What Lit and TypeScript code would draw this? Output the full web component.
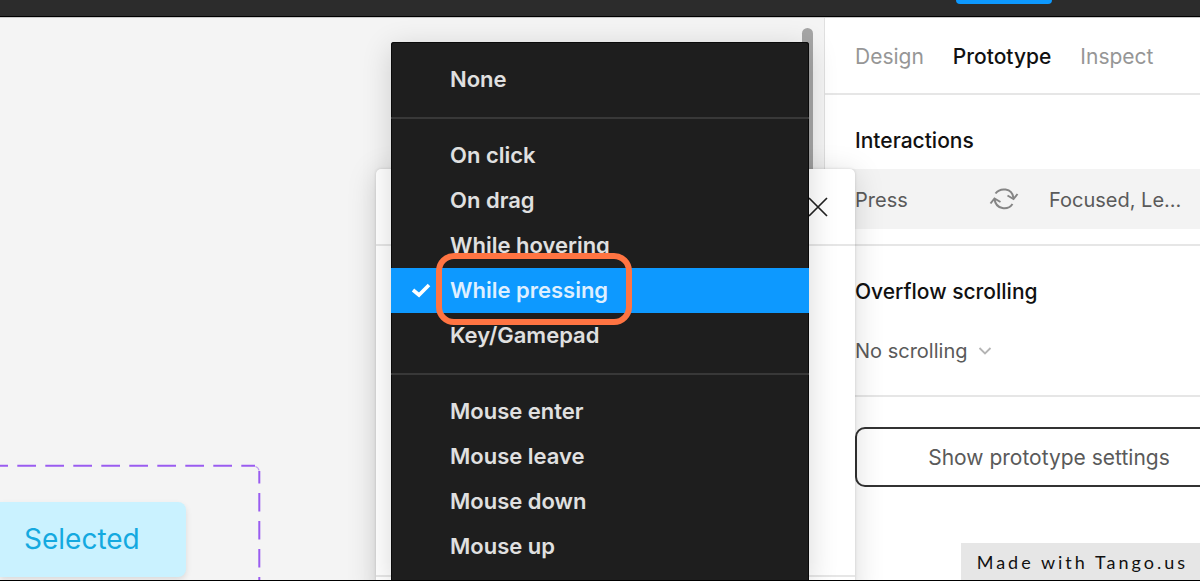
import { LitElement, html, css, svg } from "lit";
import { customElement, state } from "lit/decorators.js";

const GROUPS = [
  ["None"],
  ["On click", "On drag", "While hovering", "While pressing", "Key/Gamepad"],
  ["Mouse enter", "Mouse leave", "Mouse down", "Mouse up"],
];

@customElement("trigger-menu")
class TriggerMenu extends LitElement {
  @state() private selected = "While pressing";

  static styles = css`
    :host {
      display: block;
      box-sizing: border-box;
      padding-top: 15px;
      background: #1e1e1e;
      border-radius: 3px 3px 0 0;
      box-shadow: 0 0 0 1px #0a0a0a inset, 0 6px 30px rgba(0, 0, 0, 0.16);
    }
    .group + .group {
      margin-top: 15px;
      padding-top: 14px;
      border-top: 2px solid #383838;
    }
    .item {
      position: relative;
      display: flex;
      align-items: center;
      width: 100%;
      height: 45px;
      margin: 0;
      padding: 0 0 2px 20px;
      border: 0;
      background: none;
      color: #e0e0e0;
      font: 600 22px/28px Inter, sans-serif;
      text-align: left;
    }
    .mark {
      width: 20px;
      height: 20px;
      margin-right: 19px;
    }
    .selected {
      background: #0d99ff;
      color: #deefff;
    }
    .selected::after {
      content: "";
      position: absolute;
      box-sizing: border-box;
      left: 45px;
      top: -15px;
      width: 196px;
      height: 72px;
      border: 6px solid #ff7442;
      border-radius: 18px;
      z-index: 1;
    }
  `;

  render() {
    return html`<div role="menu">
      ${GROUPS.map(
        (g) => html`<div class="group" role="group">
          ${g.map((name) => {
            const on = name === this.selected;
            return html`<button
              class="item ${on ? "selected" : ""}"
              role="menuitemradio"
              aria-checked=${on ? "true" : "false"}
              @click=${() => (this.selected = name)}
            >
              <svg class="mark" viewBox="0 0 20 20" aria-hidden="true">
                ${on
                  ? svg`<path d="M2 10L8 15L18 5" fill="none" stroke="#fff" stroke-width="3.6"/>`
                  : ""}
              </svg>
              <span>${name}</span>
            </button>`;
          })}
        </div>`
      )}
    </div>`;
  }
}

@customElement("prototype-panel")
class PrototypePanel extends LitElement {
  static styles = css`
    :host {
      display: block;
      box-sizing: border-box;
      background: #fff;
      border-left: 1px solid #e0e0e0;
      color: #5a5a5a;
      font: 400 20px/28px Inter, sans-serif;
      overflow: hidden;
    }
    button,
    select {
      margin: 0;
      padding: 0;
      border: 0;
      background: none;
      color: inherit;
      font: inherit;
      appearance: none;
    }
    .tabs {
      display: flex;
      align-items: center;
      gap: 29px;
      box-sizing: border-box;
      height: 77px;
      padding: 2px 0 0 30px;
      border-bottom: 2px solid #e6e6e6;
    }
    .tab {
      color: #969696;
      font-size: 21px;
    }
    .tab.active {
      color: #111;
      font-weight: 500;
    }
    .title {
      display: block;
      padding: 32px 0 14px 30px;
      color: #111;
      font-size: 21px;
      font-weight: 500;
    }
    .interaction {
      display: grid;
      grid-template-columns: 134px 60px auto;
      justify-content: start;
      align-items: center;
      width: 100%;
      height: 60px;
      padding: 2px 0 0 30px;
      background: #f3f3f3;
      text-align: left;
    }
    .section {
      padding-bottom: 15px;
      border-bottom: 2px solid #e6e6e6;
    }
    .row {
      display: flex;
      align-items: center;
      gap: 10px;
      box-sizing: border-box;
      height: 60px;
      padding: 2px 0 0 30px;
    }
    .settings {
      width: 388px;
      height: 60px;
      margin: 30px 0 0 30px;
      padding-top: 2px;
      border: 2px solid #333;
      border-radius: 10px;
      font-size: 21px;
    }
    .loop {
      display: block;
      width: 30px;
      height: 24px;
    }
    .chevron {
      width: 14px;
      height: 14px;
    }
  `;

  render() {
    return html`
      <div class="tabs" role="tablist">
        <button class="tab" role="tab">Design</button>
        <button class="tab active" role="tab" aria-selected="true">Prototype</button>
        <button class="tab" role="tab">Inspect</button>
      </div>
      <section class="section">
        <span class="title">Interactions</span>
        <button class="interaction">
          <span>Press</span>
          <svg class="loop" viewBox="0 0 30 24" fill="none" stroke="#858585" stroke-width="2" aria-hidden="true">
            <path d="M6.500 5.500C11 -.5 23 -.5 24.500 10M5.500 11C7 22 19 22.500 23.500 16" />
            <path d="M18.500 7.500L24.500 11L28.500 6M1.500 15.500L5.500 10.500L11.500 14" />
          </svg>
          <span>Focused, Le...</span>
        </button>
      </section>
      <section class="section">
        <label class="title" for="overflow">Overflow scrolling</label>
        <div class="row">
          <select id="overflow">
            <option>No scrolling</option>
          </select>
          <svg class="chevron" viewBox="0 0 14 14" aria-hidden="true">
            <path d="M1.500 4L7 9.500L12.500 4" fill="none" stroke="#b4b4b4" stroke-width="1.800" />
          </svg>
        </div>
      </section>
      <button class="settings">Show prototype settings</button>
    `;
  }
}

@customElement("app-root")
class AppRoot extends LitElement {
  static styles = css`
    :host {
      display: flex;
      flex-direction: column;
      box-sizing: border-box;
      position: relative;
      height: 100vh;
      overflow: hidden;
      border-bottom: 1px solid #000;
      font-family: Inter, sans-serif;
    }
    .bar {
      flex: none;
      display: flex;
      justify-content: flex-end;
      height: 16px;
      padding-right: 148px;
      background: #2c2c2c;
      border-bottom: 1px solid #000;
    }
    .share {
      width: 96px;
      height: 4px;
      background: #0d99ff;
      border-radius: 0 0 8px 8px;
    }
    .body {
      flex: 1;
      min-height: 0;
      display: grid;
      grid-template-columns: 1fr 376px;
      border-top: 1px solid #c8c8c8;
    }
    .canvas {
      position: relative;
      background: #f4f4f4;
      overflow: hidden;
    }
    .frame {
      position: absolute;
      left: 0;
      top: 442px;
      width: 270px;
      height: 125px;
    }
    .node {
      position: absolute;
      box-sizing: border-box;
      left: 0;
      top: 484px;
      padding: 19px 46px 20px 24px;
      background: #caf2ff;
      border-radius: 0 8px 8px 0;
      box-shadow: 0 3px 6px rgba(0, 0, 0, 0.1);
      color: #14a9e0;
      font-size: 28px;
      line-height: 36px;
    }
    .scroll {
      position: absolute;
      right: 11px;
      top: 10px;
      width: 11px;
      height: 300px;
      border-radius: 6px;
      background: #a6a6a6;
    }
    .dialog {
      position: absolute;
      box-sizing: border-box;
      right: 345px;
      top: 169px;
      bottom: -20px;
      width: 479px;
      background: #fff;
      border-radius: 5px;
      box-shadow: 0 4px 30px rgba(0, 0, 0, 0.15), 0 0 3px rgba(0, 0, 0, 0.15);
    }
    .head {
      display: flex;
      align-items: center;
      justify-content: flex-end;
      height: 75px;
      padding-right: 27px;
      border-bottom: 2px solid #e6e6e6;
    }
    .close {
      display: flex;
      margin: 0;
      padding: 0;
      border: 0;
      background: none;
    }
    .cross {
      width: 20px;
      height: 20px;
    }
    .content {
      height: 329px;
      border-bottom: 2px solid #e6e6e6;
    }
    .menu {
      position: absolute;
      right: 391px;
      top: 42px;
      bottom: -1px;
      width: 418px;
    }
    .credit {
      position: absolute;
      right: 0;
      bottom: -1px;
      padding: 5px 12px 5px 16px;
      background: #e6e6e6;
      color: #111;
      font: 400 18px/28px Lato, sans-serif;
      letter-spacing: 3px;
    }
  `;

  render() {
    return html`
      <header class="bar"><div class="share"></div></header>
      <div class="body">
        <main class="canvas">
          <svg class="frame" viewBox="0 0 270 125" fill="none" stroke="#9a5cf0" stroke-width="2" aria-hidden="true">
            <path d="M-10.700 5.700H255" stroke-dasharray="18.700 9.300" />
            <path d="M255.500 6.500A5 5 0 0 1 259 10.500" stroke-width="1.200" opacity=".6" />
            <path d="M259.300 11V23.500M259.300 33V51.500M259.300 61V79.500M259.300 89V107.500M259.300 117V125" />
          </svg>
          <div class="node">Selected</div>
          <div class="scroll"></div>
        </main>
        <prototype-panel></prototype-panel>
      </div>
      <section class="dialog" role="dialog">
        <div class="head">
          <button class="close" aria-label="Close">
            <svg class="cross" viewBox="0 0 20 20" aria-hidden="true">
              <path d="M1 1L19 19M19 1L1 19" stroke="#222" stroke-width="1.700" />
            </svg>
          </button>
        </div>
        <div class="content"></div>
      </section>
      <trigger-menu class="menu"></trigger-menu>
      <footer class="credit">Made with Tango.us</footer>
    `;
  }
}
